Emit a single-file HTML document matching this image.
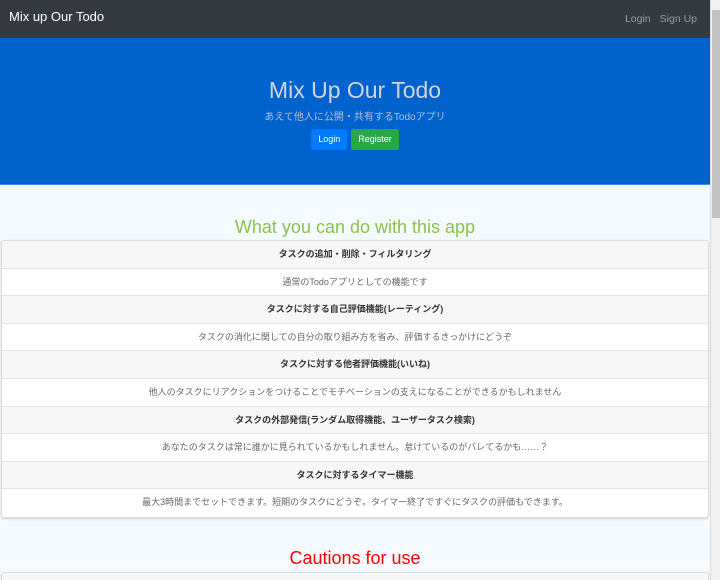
<!DOCTYPE html>
<html><head><meta charset="utf-8"><style>
*{box-sizing:border-box;margin:0;padding:0}
body{width:720px;height:580px;overflow:hidden;background:#f5faff;font-family:"Liberation Sans","Noto Sans CJK JP",sans-serif;position:relative}
.main{position:absolute;left:0;top:0;width:710px;height:580px;overflow:hidden}
.nav{height:38px;background:#343a40;position:relative}
.brand{position:absolute;left:9px;top:9px;color:#fff;font-size:13px}
.links{position:absolute;right:13px;top:13px;color:#9a9da0;font-size:10.5px}
.links span{margin-left:9px}
.jumbo{height:147px;background:#0062cc;text-align:center;padding-top:39px;border-bottom:1px solid #3a8ee6}
.jumbo h1{font-weight:normal;font-size:23px;color:#d0d5dc;line-height:26px}
.jumbo p{font-size:10px;color:#b0c0d8;margin-top:5px}
.btns{margin-top:6px}
.btn{display:inline-block;height:21px;line-height:21px;font-size:9px;color:#fff;border-radius:2px;padding:0 7px;margin:0 2px}
h2{font-weight:normal;text-align:center;font-size:18px}
.card{margin:0 1px;border:1px solid #ddd;border-radius:3px;background:#fff;box-shadow:0 1px 2px rgba(0,0,0,.15)}
.row{height:27.6px;line-height:27px;text-align:center;font-size:9px;border-bottom:1px solid #e4e4e4}
.h{background:#f7f7f7;font-weight:bold;color:#333}
.b{color:#666}
.row:last-child{border-bottom:none}
.sb{position:absolute;right:0;top:0;width:10px;height:580px;background:#f0f0f0;border-left:1px solid #ddd}
.thumb{position:absolute;left:1px;top:10px;width:8px;height:208px;background:#c1c1c1}
</style></head><body>
<div class="main">
<div class="nav"><div class="brand">Mix up Our Todo</div><div class="links"><span>Login</span><span>Sign Up</span></div></div>
<div class="jumbo"><h1>Mix Up Our Todo</h1><p>あえて他人に公開・共有するTodoアプリ</p>
<div class="btns"><span class="btn" style="background:#007bff">Login</span><span class="btn" style="background:#28a745">Register</span></div></div>
<h2 style="color:#8bc34a;margin-top:30px;height:25px;line-height:24px">What you can do with this app</h2>
<div class="card">
<div class="row h">タスクの追加・削除・フィルタリング</div>
<div class="row b">通常のTodoアプリとしての機能です</div>
<div class="row h">タスクに対する自己評価機能(レーティング)</div>
<div class="row b">タスクの消化に関しての自分の取り組み方を省み、評価するきっかけにどうぞ</div>
<div class="row h">タスクに対する他者評価機能(いいね)</div>
<div class="row b">他人のタスクにリアクションをつけることでモチベーションの支えになることができるかもしれません</div>
<div class="row h">タスクの外部発信(ランダム取得機能、ユーザータスク検索)</div>
<div class="row b">あなたのタスクは常に誰かに見られているかもしれません。怠けているのがバレてるかも……？</div>
<div class="row h">タスクに対するタイマー機能</div>
<div class="row b">最大3時間までセットできます。短期のタスクにどうぞ。タイマー終了ですぐにタスクの評価もできます。</div>
</div>
<h2 style="color:#f00;margin-top:28px;height:26px;line-height:24px">Cautions for use</h2>
<div class="card" style="height:40px;background:#f7f7f7"></div>
</div>
<div class="sb"><div class="thumb"></div></div>
</body></html>
